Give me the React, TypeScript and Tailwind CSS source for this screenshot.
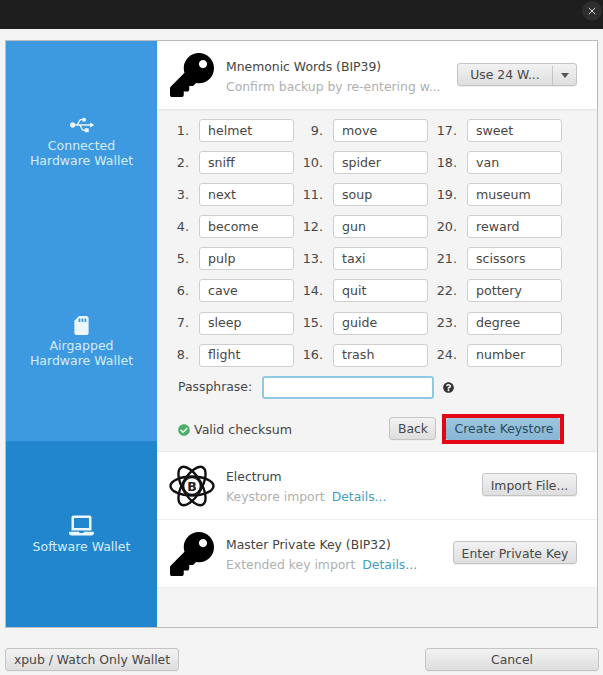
import { ReactNode } from "react";
import { FaCheckCircle, FaKey, FaLaptop, FaQuestionCircle, FaSdCard, FaUsb } from "react-icons/fa";
import { X } from "lucide-react";

const columns = [
  ["helmet", "sniff", "next", "become", "pulp", "cave", "sleep", "flight"],
  ["move", "spider", "soup", "gun", "taxi", "quit", "guide", "trash"],
  ["sweet", "van", "museum", "reward", "scissors", "pottery", "degree", "number"],
];

const buttonClass =
  "h-[23px] rounded-[3px] border border-[#c4c4c4] bg-gradient-to-b from-[#f2f2f2] to-[#dedede] pt-[2px] text-[12.4px] leading-none text-[#474747] shadow-[0_1px_0_#eeeeee]";

function SideItem({ icon, lines, className }: { icon: ReactNode; lines: string[]; className: string }) {
  return (
    <div className={`flex flex-col items-center justify-center text-center text-[12.5px] leading-[15px] text-[#d5ecfa] ${className}`}>
      <div className="mb-px flex h-[24px] items-center justify-center text-[#ecf6fd]">{icon}</div>
      {lines.map((line) => (
        <div key={line}>{line}</div>
      ))}
    </div>
  );
}

function ElectrumLogo() {
  return (
    <svg viewBox="0 0 46 44" className="h-[44px] w-[46px] shrink-0" fill="none" stroke="#111111" strokeWidth="2.4">
      <ellipse cx="23" cy="22" rx="21.5" ry="9.5" />
      <ellipse cx="23" cy="22" rx="21.5" ry="9.5" transform="rotate(60 23 22)" />
      <ellipse cx="23" cy="22" rx="21.5" ry="9.5" transform="rotate(120 23 22)" />
      <circle cx="23" cy="22" r="8.5" fill="#ffffff" strokeWidth="1.6" />
      <text x="23" y="26.5" textAnchor="middle" fontSize="12.5" fontWeight="700" fill="#222222" stroke="none">
        B
      </text>
    </svg>
  );
}

function ImportRow({
  icon,
  title,
  subtitle,
  details,
  action,
}: {
  icon: ReactNode;
  title: string;
  subtitle: string;
  details?: string;
  action: ReactNode;
}) {
  return (
    <div className="flex h-[68px] items-center border-b border-[#efefef] bg-white pl-[13px] pr-[20px]">
      <div className="flex w-[44px] shrink-0 justify-center">{icon}</div>
      <div className="ml-[12px] min-w-0 flex-1 pt-[2px]">
        <div className="text-[12.4px] leading-[17px] text-[#444444]">{title}</div>
        <div className="mt-[3px] flex gap-[7px] text-[12.4px] leading-[17px] text-[#b0b0b0]">
          <span>{subtitle}</span>
          {details ? <span className="text-[#3f9fc0]">{details}</span> : null}
        </div>
      </div>
      <div className="mb-[2px]">{action}</div>
    </div>
  );
}

export default function App() {
  return (
    <div className="flex h-[675px] w-[603px] flex-col overflow-hidden bg-[#f4f4f4] font-['DejaVu_Sans',sans-serif]">
      <div className="flex h-[29px] shrink-0 justify-end bg-[#1e1e1e] pr-[1px] pt-px">
        <div className="flex h-[20px] w-[20px] items-center justify-center rounded-full bg-[#2e2e2e] text-[#d8d8d8]">
          <X size={12} strokeWidth={2} />
        </div>
      </div>

      <div className="mx-[5px] mt-[11px] flex h-[588px] border border-[#bdbdbd]">
        <div className="flex w-[151px] shrink-0 flex-col bg-[#3d9ae0]">
          <SideItem className="h-[201px] pb-[3px]" icon={<FaUsb size={24} />} lines={["Connected", "Hardware Wallet"]} />
          <SideItem className="h-[199px] pb-[2px]" icon={<FaSdCard size={19} />} lines={["Airgapped", "Hardware Wallet"]} />
          <SideItem className="flex-1 rounded-t-[2px] bg-[#2286cf] pb-px" icon={<FaLaptop size={25} />} lines={["Software Wallet"]} />
        </div>

        <div className="min-w-0 flex-1">
          <div className="flex h-[68px] items-center bg-white pl-[13px] pr-[20px] shadow-[0_1px_3px_rgba(0,0,0,0.08)]">
            <FaKey size={44} className="shrink-0 text-black" />
            <div className="ml-[12px] min-w-0 flex-1 pt-[2px]">
              <div className="text-[12.4px] leading-[17px] text-[#444444]">Mnemonic Words (BIP39)</div>
              <div className="mt-[3px] text-[12.4px] leading-[17px] text-[#b0b0b0]">Confirm backup by re-entering w...</div>
            </div>
            <div className={`mb-px flex w-[120px] items-center ${buttonClass}`}>
              <span className="flex-1 text-center">Use 24 W...</span>
              <span className="flex h-full w-[24px] items-center justify-center border-l border-[#c4c4c4]">
                <span className="h-0 w-0 border-x-[4px] border-t-[5px] border-x-transparent border-t-[#555555]" />
              </span>
            </div>
          </div>

          <div className="h-[343px] border-b border-[#e8e8e8] pl-[20px] pt-[10px]">
            <div className="flex">
              {columns.map((words, col) => (
                <div key={col} className="flex w-[134px] flex-col gap-[9.1px]">
                  {words.map((word, row) => (
                    <div key={word} className="flex h-[23px] items-center">
                      <span className="w-[12px] shrink-0 whitespace-nowrap pt-px text-[12.8px] leading-none text-[#474747] [direction:rtl]">
                        <span className="[direction:ltr] [unicode-bidi:isolate]">{col * 8 + row + 1}.</span>
                      </span>
                      <div className="ml-[10px] flex h-[23px] w-[95px] items-center rounded-[3px] border border-[#cfcfcf] bg-white pl-[8px] pt-px text-[12.6px] leading-none text-[#474747]">
                        {word}
                      </div>
                    </div>
                  ))}
                </div>
              ))}
            </div>

            <div className="mt-[9px] flex h-[23px] items-center">
              <span className="w-[85px] pl-px text-[12.4px] text-[#474747]">Passphrase:</span>
              <div className="h-[23px] w-[172px] rounded-[3px] border-2 border-[#8ecae6] bg-white" />
              <FaQuestionCircle size={11} className="ml-[9px] text-[#333333]" />
            </div>

            <div className="mt-[15px] flex items-center">
              <FaCheckCircle size={12} className="ml-px mt-[2px] text-[#4cae6a]" />
              <span className="ml-[4px] mt-[3px] w-[195px] text-[12.6px] text-[#474747]">Valid checksum</span>
              <button className={`w-[47px] pl-px ${buttonClass}`}>Back</button>
              <div className="ml-[6px] border-4 border-[#e30613]">
                <button className="block h-[22px] w-[114px] rounded-[2px] bg-gradient-to-b from-[#9cc6df] to-[#86b6d4] pl-[2px] pt-[2px] text-[12.4px] leading-none text-[#2d4a5e]">
                  Create Keystore
                </button>
              </div>
            </div>
          </div>

          <ImportRow
            icon={<ElectrumLogo />}
            title="Electrum"
            subtitle="Keystore import"
            details="Details..."
            action={<button className={`w-[95px] ${buttonClass}`}>Import File...</button>}
          />
          <ImportRow
            icon={<FaKey size={44} className="text-black" />}
            title="Master Private Key (BIP32)"
            subtitle="Extended key import"
            details="Details..."
            action={<button className={`w-[124px] ${buttonClass}`}>Enter Private Key</button>}
          />
        </div>
      </div>

      <div className="ml-[5px] mr-[4px] mt-[20px] flex items-center justify-between">
        <button className={`w-[174px] ${buttonClass}`}>xpub / Watch Only Wallet</button>
        <button className={`w-[174px] ${buttonClass}`}>Cancel</button>
      </div>
    </div>
  );
}
